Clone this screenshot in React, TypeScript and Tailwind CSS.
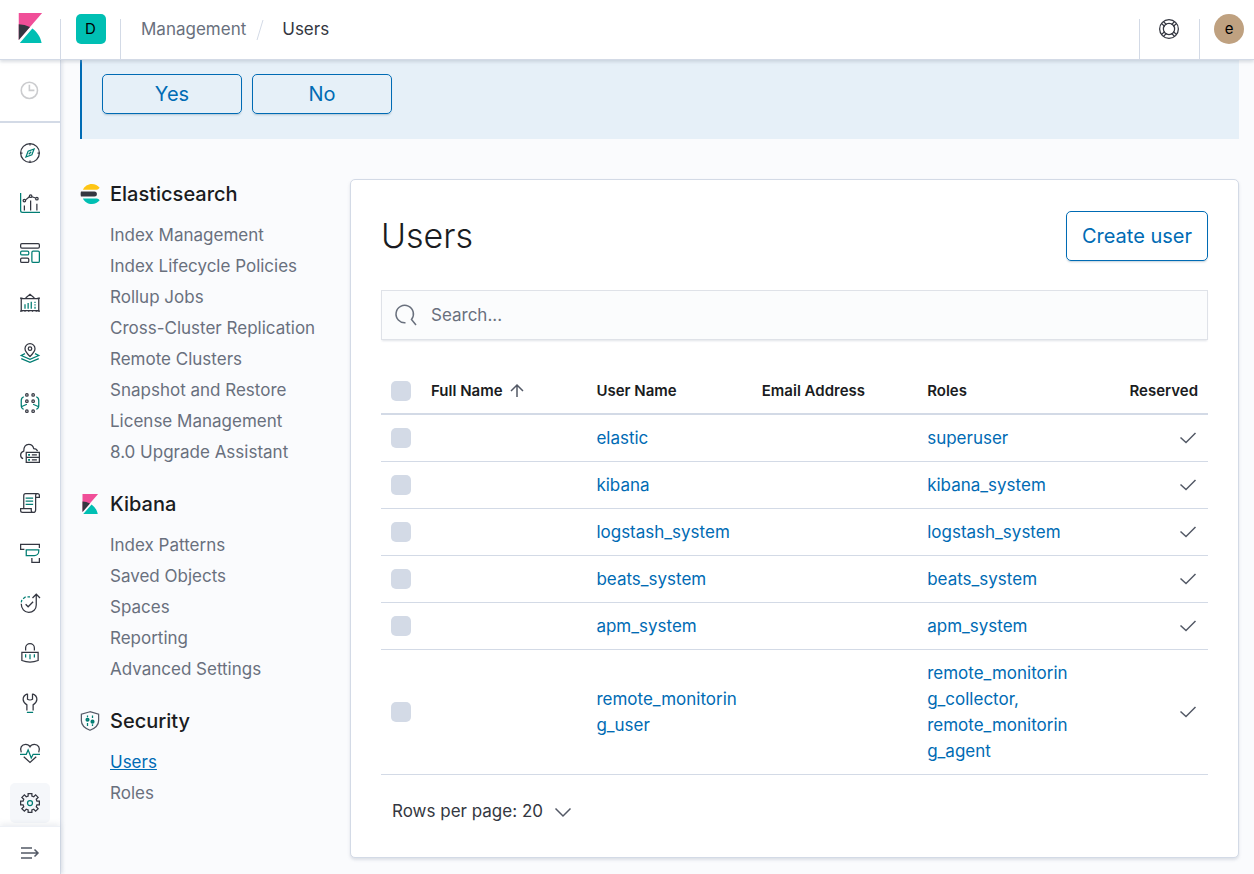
import React from 'react';

const INK = '#343741';
const TEAL = '#017d73';

interface IconProps {
  className?: string;
}

const KibanaLogo: React.FC<IconProps> = ({ className = '' }) => (
  <svg viewBox="0 0 32 32" className={className} aria-hidden="true">
    <path fill="#f04e98" d="M4 0v28.789L28.935.017z" />
    <path fill="#343741" d="M4 12v16.789l11.906-13.738A24.721 24.721 0 004 12" />
    <path
      fill="#00bfb3"
      d="M18.479 16.664L6.268 30.754l-1.073 1.237h23.191c-1.252-6.292-4.883-11.719-9.908-15.327"
    />
  </svg>
);

const ElasticsearchLogo: React.FC<IconProps> = ({ className = '' }) => (
  <svg viewBox="-1 0 32 32" className={className} aria-hidden="true">
    <path fill="#343741" d="M0 16c0 1.384.194 2.72.534 4H22a4 4 0 000-8H.534A15.984 15.984 0 000 16" />
    <path
      fill="#fec514"
      d="M28.924 7.662A15.381 15.381 0 0030.48 6C27.547 2.346 23.05 0 18 0 11.679 0 6.239 3.678 3.644 9H25.51a5.039 5.039 0 003.413-1.338"
    />
    <path
      fill="#00bfb3"
      d="M25.51 23H3.645C6.24 28.323 11.679 32 18 32c5.05 0 9.547-2.346 12.48-6a15.381 15.381 0 00-1.556-1.662A5.034 5.034 0 0025.51 23"
    />
  </svg>
);

const SecurityLogo: React.FC<IconProps> = ({ className = '' }) => (
  <svg viewBox="0 0 32 32" className={className} fill="none" strokeWidth="2" aria-hidden="true">
    <path stroke="#535966" d="M16 1.2L2.2 5v10.5c0 6 5.2 11.8 13.8 15.3 8.6-3.5 13.8-9.3 13.8-15.3V5z" />
    <path stroke={TEAL} d="M12 7v3M12 19v5M20 7v4M20 21v3" />
    <circle cx="12" cy="14" r="1.8" stroke={TEAL} strokeWidth="3" />
    <circle cx="20" cy="17" r="1.8" stroke={TEAL} strokeWidth="3" />
  </svg>
);

const navItems = [
  {
    name: 'Discover',
    icon: (
      <>
        <circle cx="16" cy="16" r="15" />
        <path d="M16 1v3M16 28v3M1 16h3M28 16h3" />
        <path stroke={TEAL} d="M22.5 9.5l-3.5 9.5-9.5 3.5L13 13z" />
        <path stroke={TEAL} d="M14 18l4-4" />
      </>
    ),
  },
  {
    name: 'Visualize',
    icon: (
      <>
        <path stroke={TEAL} d="M1 0v28a3 3 0 003 3h28" />
        <path d="M7 20v8M17 12v16M27 17v11M9 11l6-5M19 6l6 2" />
        <circle cx="7" cy="12" r="2" />
        <circle cx="17" cy="5" r="2" />
        <circle cx="27" cy="9" r="2" />
      </>
    ),
  },
  {
    name: 'Dashboard',
    icon: (
      <>
        <rect x="1" y="1" width="30" height="7" rx="2" />
        <rect x="1" y="24" width="13" height="7" rx="2" />
        <rect x="1" y="13" width="13" height="6" rx="2" stroke={TEAL} />
        <rect x="19" y="13" width="12" height="18" rx="2" stroke={TEAL} />
      </>
    ),
  },
  {
    name: 'Canvas',
    icon: (
      <>
        <path d="M2 9h28v19H2zM0 8h4M28 8h4M0 29h4M28 29h4M9 8l7-6 7 6" />
        <path d="M8 28v2M14 28v2M20 28v2M26 28v2" />
        <path stroke={TEAL} d="M8 18v7M13 16v9M18 14v11M24 14v2M24 18v2M24 22v3" />
      </>
    ),
  },
  {
    name: 'Maps',
    icon: (
      <>
        <path d="M16 21.5C11 16.5 8 13 8 9a8 8 0 0116 0c0 4-3 7.5-8 12.5z" />
        <circle cx="16" cy="9" r="2.8" />
        <path stroke={TEAL} d="M8 17l-6 3 14 6 14-6-6-3M2 25l14 6 14-6" />
      </>
    ),
  },
  {
    name: 'Machine Learning',
    icon: (
      <>
        <circle cx="11" cy="3" r="2" />
        <circle cx="21" cy="3" r="2" />
        <circle cx="11" cy="13" r="2" />
        <circle cx="21" cy="13" r="2" />
        <circle cx="11" cy="29" r="2" />
        <circle cx="21" cy="29" r="2" />
        <path stroke={TEAL} d="M6 6c-3 1-4 3-4 6v8c0 3 1 5 4 6M2 22l9-4M26 6c3 1 4 3 4 6v8c0 3-1 5-4 6M30 22l-9-4" />
      </>
    ),
  },
  {
    name: 'Infrastructure',
    icon: (
      <>
        <path d="M5 25c-3-1-4-3-4-6 0-3 2-5 5-6C6 6 9 2 14 2c4 0 7 2 8 7 3 0 5 1 6 4" />
        <path d="M10 15h21v8H10zM10 23h21v8H10zM19 19h8M19 27h8" />
        <path stroke={TEAL} strokeWidth="3" d="M13 19h3M13 27h3" />
      </>
    ),
  },
  {
    name: 'Logs',
    icon: (
      <>
        <path d="M6 24V4a3 3 0 013-3h19a3 3 0 013 3v3h-6M28 1a3 3 0 00-3 3v23a4 4 0 01-4 4H4a3 3 0 01-3-3v-3h17v3a3 3 0 003 3" />
        <path stroke={TEAL} d="M9 8h12M9 13h12M9 18h12" />
      </>
    ),
  },
  {
    name: 'APM',
    icon: (
      <>
        <path d="M7 10H1V2h30v6M31 24v7H19v-7" />
        <path stroke={TEAL} d="M10 11h20v2a7 7 0 01-7 7H10z" />
      </>
    ),
  },
  {
    name: 'Uptime',
    icon: (
      <>
        <path d="M2 17c0 8 5 14 12 14s12-5 12-12V2M20 8l6-6 6 6M9 18l4 4 8-8" />
        <path stroke={TEAL} d="M2 15l1-4M5 9l4-3M12 6h4" />
      </>
    ),
  },
  {
    name: 'SIEM',
    icon: (
      <>
        <path d="M3 15h26v13c-8 3-18 3-26 0zM9 12V8a7 7 0 0114 0v4" />
        <path stroke={TEAL} d="M9 18v5M16 18v8M23 18v5" />
      </>
    ),
  },
  {
    name: 'Dev Tools',
    icon: (
      <>
        <path d="M12 1.5C8 3 5 6 5 10c0 5 3 7 6 9v9M20 1.5c4 1.5 7 4.5 7 8.5 0 5-3 7-6 9v9M12 1v9c2 1.5 6 1.5 8 0V1" />
        <path stroke={TEAL} d="M11 31h10" />
      </>
    ),
  },
  {
    name: 'Stack Monitoring',
    icon: (
      <>
        <path d="M2 15C-1 8 3 2 9 2c3 0 6 2 7 4 1-2 4-4 7-4 6 0 10 6 7 13M6 22l10 9 10-9" />
        <path stroke={TEAL} d="M0 18h10l3-7 5 13 3-6h11" />
      </>
    ),
  },
  {
    name: 'Management',
    icon: (
      <>
        <path d="M13 1h6v4l3 1 3-3 4 4-3 3 1 3h4v6h-4l-1 3 3 3-4 4-3-3-3 1v4h-6v-4l-3-1-3 3-4-4 3-3-1-3H1v-6h4l1-3-3-3 4-4 3 3 3-1z" />
        <circle cx="16" cy="16" r="4" stroke={TEAL} />
      </>
    ),
    active: true,
  },
];

const sections = [
  {
    title: 'Elasticsearch',
    logo: <ElasticsearchLogo className="size-5" />,
    links: [
      'Index Management',
      'Index Lifecycle Policies',
      'Rollup Jobs',
      'Cross-Cluster Replication',
      'Remote Clusters',
      'Snapshot and Restore',
      'License Management',
      '8.0 Upgrade Assistant',
    ],
  },
  {
    title: 'Kibana',
    logo: <KibanaLogo className="size-5" />,
    links: ['Index Patterns', 'Saved Objects', 'Spaces', 'Reporting', 'Advanced Settings'],
  },
  {
    title: 'Security',
    logo: <SecurityLogo className="size-5" />,
    links: ['Users', 'Roles'],
  },
];

const users = [
  { name: 'elastic', roles: ['superuser'] },
  { name: 'kibana', roles: ['kibana_system'] },
  { name: 'logstash_system', roles: ['logstash_system'] },
  { name: 'beats_system', roles: ['beats_system'] },
  { name: 'apm_system', roles: ['apm_system'] },
  {
    name: 'remote_monitoring_user',
    roles: ['remote_monitoring_collector', 'remote_monitoring_agent'],
  },
];

const Checkbox: React.FC<{ label: string }> = ({ label }) => (
  <input
    type="checkbox"
    aria-label={label}
    className="block size-5 appearance-none rounded-[5px] bg-[#d3dae6] checked:bg-[#006bb4]"
  />
);

const Header: React.FC = () => (
  <header className="relative z-20 flex h-[60px] shrink-0 items-end border-b border-[#d3dae6] bg-white shadow-[0_2px_3px_rgba(152,162,179,0.35)]">
    <a href="#home" aria-label="Kibana home" className="flex h-full w-[60px] items-center justify-center pb-1">
      <KibanaLogo className="size-[30px]" />
    </a>
    <div className="flex h-10 w-[61px] items-start justify-center border-x border-[#d3dae6]">
      <button
        aria-label="Default space"
        className="-mt-[5px] flex size-[30px] items-center justify-center rounded-[5px] bg-[#00bfb3] text-[15px] text-black"
      >
        D
      </button>
    </div>
    <nav aria-label="Breadcrumbs" className="flex h-full flex-1 items-center pl-5 text-[17px]">
      <a href="#management" className="text-[#69707d]">
        Management
      </a>
      <svg viewBox="0 0 8 20" className="mr-[18px] ml-[10px] h-5 w-2" aria-hidden="true">
        <path d="M7 0L1 20" stroke="#d3dae6" />
      </svg>
      <span className="text-[#343741]">Users</span>
    </nav>
    <div className="flex h-10 w-[60px] justify-center border-l border-[#d3dae6] pr-px">
      <button aria-label="Help" className="size-5">
        <svg viewBox="0 0 32 32" className="size-5" fill="none" stroke={INK} strokeWidth="2" aria-hidden="true">
          <circle cx="16" cy="16" r="15" />
          <circle cx="16" cy="16" r="9" />
          <path d="M4 7l5 5M7 4l5 5M28 7l-5 5M25 4l-5 5M4 25l5-5M7 28l5-5M28 25l-5-5M25 28l-5-5" />
        </svg>
      </button>
    </div>
    <div className="flex h-10 w-[55px] border-l border-[#d3dae6] pl-[14px]">
      <button
        aria-label="Account menu"
        className="-mt-[5px] flex size-[30px] items-center justify-center rounded-full bg-[#bfa180] text-[15px] text-black"
      >
        e
      </button>
    </div>
  </header>
);

const SideNav: React.FC = () => (
  <nav
    aria-label="Applications"
    className="relative z-10 flex w-[61px] shrink-0 flex-col border-r border-[#d3dae6] bg-white shadow-[2px_0_3px_rgba(152,162,179,0.2)]"
  >
    <div className="flex h-[63px] shrink-0 items-center justify-center border-b-2 border-[#d3dae6]">
      <button aria-label="Recently viewed" className="size-5 opacity-25">
        <svg viewBox="0 0 32 32" className="size-5" fill="none" stroke={INK} strokeWidth="2.5" aria-hidden="true">
          <circle cx="15" cy="15" r="13" />
          <path d="M15 6v9h8" />
        </svg>
      </button>
    </div>
    <ul className="flex flex-col items-center gap-[10px] pt-[10px] pb-[3px]">
      {navItems.map(({ name, icon, active }) => (
        <li key={name}>
          <a
            href={`#${name}`}
            aria-label={name}
            className={`flex size-10 items-center justify-center rounded-[5px] ${active ? 'bg-[#f5f7fa]' : ''}`}
          >
            <svg
              viewBox="0 0 32 32"
              className="size-5 overflow-visible"
              fill="none"
              stroke={INK}
              strokeWidth="2"
              aria-hidden="true"
            >
              {icon}
            </svg>
          </a>
        </li>
      ))}
    </ul>
    <button
      aria-label="Expand navigation"
      className="mt-auto flex h-12 shrink-0 items-center justify-center border-t border-[#eef1f6] pt-1 shadow-[0_-2px_6px_rgba(152,162,179,0.2)]"
    >
      <svg viewBox="0 0 20 20" className="size-5" fill="none" stroke="#535966" strokeWidth="1.5" aria-hidden="true">
        <path d="M1 5h11M1 10h17M1 15h11M14.5 6.5L18 10l-3.5 3.5" />
      </svg>
    </button>
  </nav>
);

const ManagementMenu: React.FC = () => (
  <aside className="flex w-[270px] shrink-0 flex-col gap-[21px]">
    {sections.map(({ title, logo, links }) => (
      <section key={title}>
        <h2 className="mb-[11px] flex h-[30px] items-center gap-[10px] text-[20px] font-medium text-[#1a1c21]">
          {logo}
          {title}
        </h2>
        <ul className="pl-[30px] text-[17px] leading-[31px]">
          {links.map((link) => (
            <li key={link}>
              <a
                href={`#${link}`}
                className={link === 'Users' ? 'text-[#006bb4] underline' : 'text-[#69707d]'}
              >
                {link}
              </a>
            </li>
          ))}
        </ul>
      </section>
    ))}
  </aside>
);

const UsersTable: React.FC = () => (
  <table className="mt-[30px] w-full table-fixed border-collapse text-left text-[17px] leading-[26px]">
    <thead className="text-[15px] text-[#1a1c21]">
      <tr className="h-[44px] border-b-2 border-[#d3dae6]">
        <th className="w-10 pb-[2px] pl-[10px]">
          <Checkbox label="Select all users" />
        </th>
        <th className="w-1/5 px-[10px] pb-[2px] font-semibold" aria-sort="ascending">
          <button className="flex items-center gap-[6px] font-semibold">
            Full Name
            <svg viewBox="0 0 16 16" className="size-4" fill="none" stroke="#535966" strokeWidth="1.5" aria-hidden="true">
              <path d="M8 14V2M2 8l6-6 6 6" />
            </svg>
          </button>
        </th>
        <th className="w-1/5 px-[10px] pb-[2px] font-semibold">User Name</th>
        <th className="w-1/5 px-[10px] pb-[2px] font-semibold">Email Address</th>
        <th className="w-1/5 px-[10px] pb-[2px] font-semibold">Roles</th>
        <th className="px-[10px] pb-[2px] text-right font-semibold">Reserved</th>
      </tr>
    </thead>
    <tbody className="text-[#006bb4]">
      {users.map(({ name, roles }) => (
        <tr key={name} className="border-b border-[#d3dae6]">
          <td className="pl-[10px]">
            <Checkbox label={`Select ${name}`} />
          </td>
          <td />
          <td className="px-[10px] py-[10px] wrap-break-word">
            <a href={`#users/${name}`}>{name}</a>
          </td>
          <td />
          <td className="px-[10px] py-[10px] wrap-break-word">
            {roles.map((role, i) => (
              <a key={role} href={`#roles/${role}`} className="block">
                {i < roles.length - 1 ? `${role},` : role}
              </a>
            ))}
          </td>
          <td className="px-[10px]">
            <svg
              viewBox="0 0 20 20"
              className="ml-auto size-5"
              fill="none"
              stroke="#535966"
              strokeWidth="1.5"
              role="img"
              aria-label="Reserved user"
            >
              <path d="M2.5 9.5l5.5 5 9.5-9.5" />
            </svg>
          </td>
        </tr>
      ))}
    </tbody>
  </table>
);

const App: React.FC = () => (
  <div className="flex min-h-screen flex-col bg-[#fafbfd] font-['Inter',sans-serif] text-[#343741]">
    <Header />
    <div className="flex flex-1">
      <SideNav />
      <main className="min-w-0 flex-1 pr-[15px] pb-[15px] pl-[19px]">
        <div className="mb-10 flex gap-[10px] border-l-2 border-[#006bb4] bg-[#e6f0f8] px-5 pt-[14px] pb-[25px]">
          {['Yes', 'No'].map((answer) => (
            <button
              key={answer}
              className="h-10 w-[140px] rounded-[5px] border border-[#006bb4] text-[20px] text-[#006bb4] shadow-[0_2px_2px_-1px_rgba(54,97,126,0.3)]"
            >
              {answer}
            </button>
          ))}
        </div>
        <div className="flex items-start">
          <ManagementMenu />
          <div className="min-w-0 flex-1 rounded-[5px] border border-[#d3dae6] bg-white p-[30px] shadow-[0_2px_3px_rgba(152,162,179,0.3)]">
            <div className="flex items-center justify-between">
              <h1 className="text-[34px] leading-[52px] font-light text-[#1a1c21]">Users</h1>
              <button className="-my-px h-[50px] rounded-[5px] border border-[#006bb4] px-[15px] text-[20px] text-[#006bb4] shadow-[0_2px_2px_-1px_rgba(54,97,126,0.3)]">
                Create user
              </button>
            </div>
            <div className="relative mt-7">
              <svg
                viewBox="0 0 20 20"
                className="absolute top-[15px] left-[15px] size-5 overflow-visible"
                fill="none"
                stroke="#69707d"
                strokeWidth="1.5"
                aria-hidden="true"
              >
                <path d="M9.5 17.7A8.7 8.7 0 1 1 15.5 14.5L20 20" />
              </svg>
              <input
                type="search"
                aria-label="Search users"
                placeholder="Search..."
                className="block h-[50px] w-full border border-[#dfe2e8] bg-[#fbfcfd] pr-4 pl-[49px] text-[17px] shadow-[0_2px_2px_-1px_rgba(152,162,179,0.3)] placeholder:text-[#69707d]"
              />
            </div>
            <UsersTable />
            <button className="mt-[22px] ml-[11px] flex h-[30px] items-center gap-[10px] text-[17px]">
              Rows per page: 20
              <svg viewBox="0 0 20 20" className="size-5" fill="none" stroke="#535966" strokeWidth="1.5" aria-hidden="true">
                <path d="M2.5 6.5L10 14l7.5-7.5" />
              </svg>
            </button>
          </div>
        </div>
      </main>
    </div>
  </div>
);

export default App;
